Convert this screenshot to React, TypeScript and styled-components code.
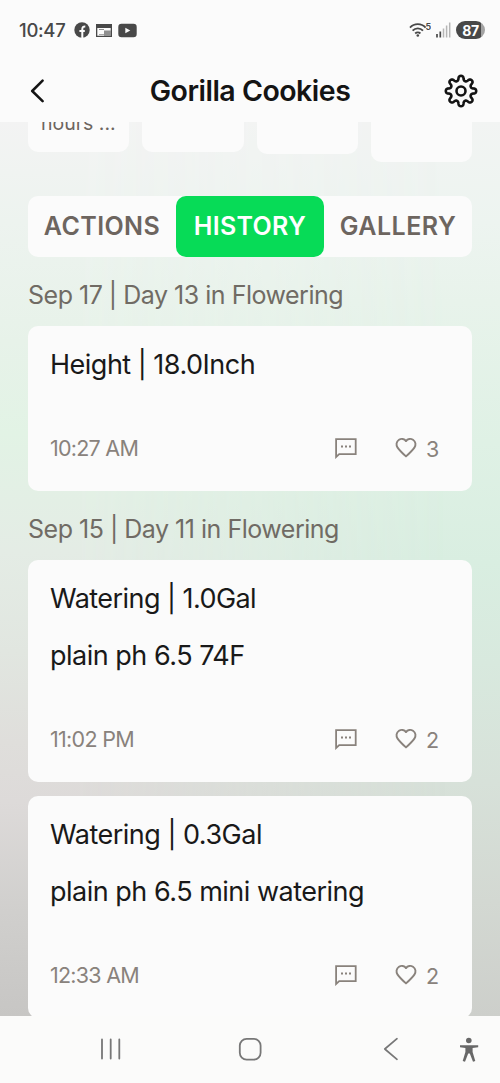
import React from "react";
import styled, { createGlobalStyle } from "styled-components";

const GlobalStyle = createGlobalStyle`
  * { box-sizing: border-box; }
  body { margin: 0; background: #fbfbfb; font-family: Inter, "Liberation Sans", sans-serif; }
  svg { display: block; flex: none; }
`;

const Screen = styled.div`
  display: flex;
  flex-direction: column;
  width: 500px;
  height: 1083px;
  overflow: hidden;
  background: #fbfbfb;
`;

const StatusBar = styled.div`
  display: flex;
  align-items: center;
  height: 60px;
  padding: 0 15px 0 19px;
  color: #484848;
`;

const Clock = styled.span`
  width: 55px;
  font-size: 18.5px;
  font-weight: 500;
  letter-spacing: -0.3px;
`;

const StatusIcons = styled.div<{ $gap: number; $end?: boolean }>`
  display: flex;
  align-items: center;
  gap: ${(p) => p.$gap}px;
  margin-left: ${(p) => (p.$end ? "auto" : "0")};
`;

const Battery = styled.div`
  display: flex;
  align-items: center;
  justify-content: center;
  width: 29px;
  height: 18px;
  border-radius: 9px;
  background: linear-gradient(90deg, #484848 87%, #a3a3a3 87%);
  color: #fff;
  font-size: 14px;
  font-weight: 700;
  letter-spacing: -0.5px;
`;

const Header = styled.header`
  display: grid;
  grid-template-columns: 60px 1fr 60px;
  align-items: center;
  height: 62px;
  padding: 0 22px 0 22px;
`;

const Title = styled.h1`
  margin: 0;
  text-align: center;
  white-space: nowrap;
  color: #141414;
  font-size: 28.5px;
  font-weight: 600;
  line-height: 34px;
  letter-spacing: -0.5px;
`;

const IconButton = styled.button<{ $right?: boolean }>`
  display: flex;
  justify-content: ${(p) => (p.$right ? "flex-end" : "flex-start")};
  padding: 0;
  border: 0;
  background: none;
  color: #141414;
`;

const Content = styled.main`
  position: relative;
  z-index: 0;
  flex: none;
  height: 894px;
  padding: 0 28px;
  overflow: hidden;
  background: linear-gradient(180deg, #f2f4f3 0, #edf4f0 100px, #e8f3eb 180px, #dff1e5 320px, #d9eee1 440px, #d8e9de 540px, #d7e1d9 660px, #d3d8d2 780px, #cdcfcb 894px);

  &::before {
    content: "";
    position: absolute;
    z-index: -1;
    inset: 0;
    background: linear-gradient(180deg, #f3f3f3 0, #edf3ef 100px, #e7f2e9 220px, #e2f3e5 310px, #e4ece5 430px, #e1e6e0 530px, #dfdedb 620px, #dddad9 680px, #d0cfcd 790px, #c7c6c4 894px);
    mask-image: linear-gradient(90deg, #000 15%, transparent 90%);
  }
`;

const StatRow = styled.div`
  display: grid;
  grid-template-columns: repeat(4, 1fr);
  gap: 13px;
  align-items: start;
  height: 74px;
`;

const Stat = styled.div<{ $height: number }>`
  height: ${(p) => p.$height}px;
  padding-left: 13px;
  overflow: hidden;
  border-radius: 0 0 10px 10px;
  background: #fbfbfb;
`;

const StatText = styled.div`
  margin-top: -11px;
  white-space: nowrap;
  color: #6d655f;
  font-size: 19.5px;
  line-height: 24px;
`;

const Tabs = styled.div`
  display: grid;
  grid-template-columns: 148px 148px 148px;
  height: 61px;
  border-radius: 10px;
  background: #fbfbfb;
`;

const Tab = styled.button<{ $active?: boolean; $spacing: number }>`
  padding: 0 0 2px;
  border: 0;
  border-radius: 10px;
  background: ${(p) => (p.$active ? "#07db57" : "transparent")};
  color: ${(p) => (p.$active ? "#fff" : "#6d655f")};
  font-family: inherit;
  font-size: 25px;
  font-weight: 600;
  letter-spacing: ${(p) => p.$spacing}px;
  white-space: nowrap;
`;

const DateHeading = styled.h2<{ $spacing: number }>`
  margin: 0;
  height: 69px;
  padding-top: 5px;
  color: #706b64;
  font-size: 25px;
  font-weight: 400;
  line-height: 66px;
  letter-spacing: ${(p) => p.$spacing}px;
  white-space: nowrap;
`;

const Card = styled.article<{ $height: number }>`
  display: flex;
  flex-direction: column;
  height: ${(p) => p.$height}px;
  padding: 22px 33px 24px 22px;
  border-radius: 10px;
  background: #fbfbfb;

  & + & { margin-top: 14px; }
`;

const Line = styled.p<{ $spacing: number }>`
  margin: 0 0 23px;
  color: #191919;
  font-size: 27px;
  line-height: 34px;
  letter-spacing: ${(p) => p.$spacing}px;
  white-space: nowrap;
`;

const Footer = styled.footer`
  display: flex;
  align-items: center;
  height: 38px;
  margin-top: auto;
  color: #89827c;
`;

const Time = styled.span<{ $spacing: number }>`
  margin-right: auto;
  padding-bottom: 1px;
  font-size: 21.5px;
  letter-spacing: ${(p) => p.$spacing}px;
`;

const Likes = styled.div`
  display: flex;
  align-items: center;
  gap: 9px;
  margin-left: 38px;
`;

const Count = styled.span`
  width: 13px;
  padding-top: 1px;
  font-size: 21.5px;
  line-height: 26px;
`;

const NavBar = styled.nav`
  display: grid;
  grid-template-columns: 180px 140px 140px 1fr;
  align-items: center;
  height: 67px;
  padding-bottom: 2px;
  background: #fbfbfa;
`;

const NavItem = styled.div<{ $left: number }>`
  padding-left: ${(p) => p.$left}px;
`;

const Reactions = ({ count }: { count: number }) => (
  <>
    <svg width="22" height="22" viewBox="0 0 22 22" fill="none" stroke="currentColor" strokeWidth="1.8">
      <path d="M1.1 18.8V2.1h19.6v15H4.2L1.1 20V15" />
      <path d="M6 9.6h2M10 9.6h2M14 9.6h2" strokeWidth="2" />
    </svg>
    <Likes>
      <svg width="22" height="22" viewBox="0 0 22 22" fill="none" stroke="currentColor" strokeWidth="1.9" strokeLinejoin="round">
        <path d="M11 4.1C9.4 1.7 6.2 1.3 4 2.8 1.2 4.7.8 8 2.6 10.6 4.300 13 7.600 16.300 11 19.400c3.400-3.100 6.700-6.400 8.400-8.800C21.200 8 20.800 4.700 18 2.800c-2.200-1.500-5.400-1.100-7 1.300Z" />
      </svg>
      <Count>{count}</Count>
    </Likes>
  </>
);

type EntryProps = { height: number; lines: [string, number][]; time: string; spacing: number; likes: number };

const Entry = ({ height, lines, time, spacing, likes }: EntryProps) => (
  <Card $height={height}>
    {lines.map(([text, s]) => (
      <Line key={text} $spacing={s}>{text}</Line>
    ))}
    <Footer>
      <Time $spacing={spacing}>{time}</Time>
      <Reactions count={likes} />
    </Footer>
  </Card>
);

const gearPath = (() => {
  const points: string[] = [];
  for (let i = 0; i <= 160; i++) {
    const t = (i / 160) * Math.PI * 2;
    // Shifting the angle widens each tooth's tip and rounds the valley between teeth.
    const a = t + 0.035 * Math.sin(16 * t);
    const r = 12.9 + 2.3 * Math.cos(8 * t);
    points.push(`${(17 + r * Math.sin(a)).toFixed(2)} ${(17 - r * Math.cos(a)).toFixed(2)}`);
  }
  return `M${points.join("L")}Z`;
})();

export default function App() {
  return (
    <Screen>
      <GlobalStyle />
      <StatusBar>
        <Clock>10:47</Clock>
        <StatusIcons $gap={6}>
          <svg width="16" height="16" viewBox="0 0 16 16">
            <circle cx="8" cy="8" r="7.700" fill="#484848" />
            <path d="M8.300 16V7.200c0-2 1-2.800 3-2.700M5.400 9h5.400" fill="none" stroke="#fbfbfb" strokeWidth="2" />
          </svg>
          <svg width="16" height="15" viewBox="0 0 16 15" fill="#484848">
            <path fillRule="evenodd" d="M0 1h16v13H0ZM1.300 5v7.700h13.400V5Z" />
            <path d="M3 6h5v.9H3zM3 11h5v.8H3zM8 7.500h6.700v5.200H8z" opacity=".6" />
          </svg>
          <svg width="19" height="15" viewBox="0 0 19 15">
            <rect x=".3" y=".8" width="18.400" height="13.400" rx="3.200" fill="#484848" />
            <path d="M7.300 4.700v5.600l5-2.800Z" fill="#fbfbfb" />
          </svg>
        </StatusIcons>
        <StatusIcons $gap={5} $end>
          <svg width="22" height="17" viewBox="0 0 22 17" fill="none" stroke="#484848" strokeWidth="1.800">
            <path d="M1 5.600c4.300-4.600 11.300-4.600 15.600 0M3.600 8.600c2.900-3.100 7.500-3.100 10.400 0M6.200 11.500c1.500-1.500 3.700-1.500 5.200 0" />
            <circle cx="8.800" cy="13.500" r="1.300" fill="#484848" stroke="none" />
            <text x="16.500" y="7.500" fontSize="9" fontWeight="600" fill="#484848" stroke="none">5</text>
          </svg>
          <svg width="15" height="16" viewBox="0 0 15 16">
            <path d="M1 12v3.500M4.300 9.500v6" stroke="#484848" strokeWidth="1.700" />
            <path d="M7.500 6.500v9M10.600 3.500v12M13.700.5v15" stroke="#b5b5b5" strokeWidth="1.500" />
          </svg>
          <Battery>87</Battery>
        </StatusIcons>
      </StatusBar>

      <Header>
        <IconButton aria-label="Back">
          <svg width="24" height="24" viewBox="0 0 24 24" fill="none" stroke="currentColor" strokeWidth="2.500" strokeLinecap="round" strokeLinejoin="round">
            <path d="M20.600 1.600 10.200 12l10.400 10.200" />
          </svg>
        </IconButton>
        <Title>Gorilla Cookies</Title>
        <IconButton $right aria-label="Settings">
          <svg width="34" height="34" viewBox="0 0 34 34" fill="none" stroke="currentColor" strokeWidth="2.600" strokeLinejoin="round">
            <path d={gearPath} />
            <circle cx="17" cy="17" r="4.500" />
          </svg>
        </IconButton>
      </Header>

      <Content>
        <StatRow>
          <Stat $height={30}><StatText>hours ...</StatText></Stat>
          <Stat $height={30} />
          <Stat $height={32} />
          <Stat $height={40} />
        </StatRow>
        <Tabs>
          <Tab $spacing={0.4}>ACTIONS</Tab>
          <Tab $active $spacing={0.3}>HISTORY</Tab>
          <Tab $spacing={0.5}>GALLERY</Tab>
        </Tabs>
        <DateHeading $spacing={-0.49}>Sep 17 | Day 13 in Flowering</DateHeading>
        <Entry height={165} lines={[["Height | 18.0Inch", -0.5]]} time="10:27 AM" spacing={-0.75} likes={3} />
        <DateHeading $spacing={-0.49}>Sep 15 | Day 11 in Flowering</DateHeading>
        <Entry height={222} lines={[["Watering | 1.0Gal", -0.55], ["plain ph 6.5 74F", -0.5]]} time="11:02 PM" spacing={-0.7} likes={2} />
        <Entry height={222} lines={[["Watering | 0.3Gal", -0.5], ["plain ph 6.5 mini watering", -0.5]]} time="12:33 AM" spacing={-0.75} likes={2} />
      </Content>

      <NavBar>
        <NavItem $left={99}>
          <svg width="24" height="24" viewBox="0 0 24 24" stroke="#777" strokeWidth="1.800" strokeLinecap="round">
            <path d="M3 2.500v19M11.700 2.500v19M20.300 2.500v19" />
          </svg>
        </NavItem>
        <NavItem $left={58}>
          <svg width="24" height="24" viewBox="0 0 24 24" fill="none" stroke="#777" strokeWidth="1.800">
            <rect x="1.800" y="1.800" width="20.800" height="20.800" rx="6.800" />
          </svg>
        </NavItem>
        <NavItem $left={62}>
          <svg width="18" height="24" viewBox="0 0 18 24" fill="none" stroke="#777" strokeWidth="1.700" strokeLinecap="round" strokeLinejoin="round">
            <path d="M15 1.700 2.800 12 15 22.300" />
          </svg>
        </NavItem>
        <NavItem $left={0}>
          <svg width="20" height="26" viewBox="0 0 20 26" fill="#686868">
            <circle cx="8.800" cy="4.500" r="2.800" />
            <path d="M0 9.200h18.200v2.100l-5.600.6v4.200l2.700 9-2.300.6-3.200-8.200H8.200l-3.200 8.200-2.300-.6 2.700-9v-4.200L0 11.300Z" />
          </svg>
        </NavItem>
      </NavBar>
    </Screen>
  );
}
